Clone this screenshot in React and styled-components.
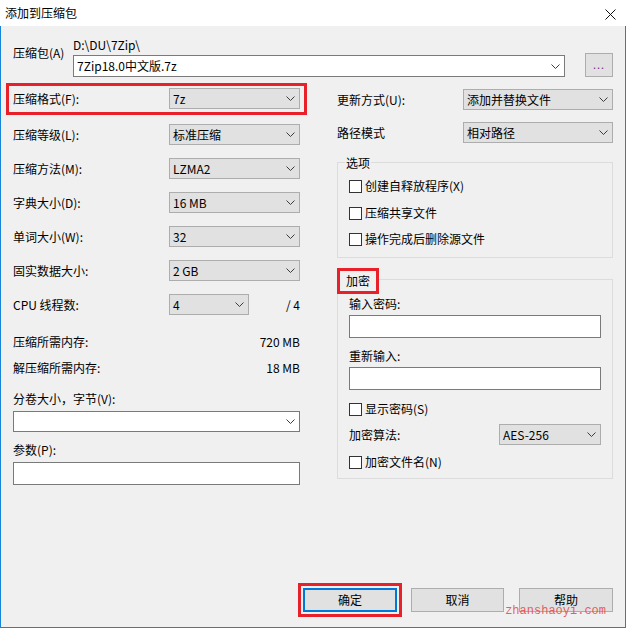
import React from 'react';
import styled, { createGlobalStyle } from 'styled-components';

const GlobalStyle = createGlobalStyle`
  html, body { margin: 0; padding: 0; background: #f0f0f0; }
  body {
    font-family: "Noto Sans CJK SC", "Noto Sans", sans-serif;
    font-size: 12px;
    color: #000;
  }
  * { box-sizing: border-box; }
`;

const Window = styled.div`
  width: 626px;
  height: 628px;
  display: flex;
  flex-direction: column;
  overflow: hidden;
`;

const TitleBar = styled.div`
  height: 26px;
  flex-shrink: 0;
  background: #fff;
  display: flex;
  align-items: center;
  justify-content: space-between;
  padding-left: 5px;
`;

const TitleText = styled.span`
  line-height: 16px;
`;

const CloseBox = styled.div`
  width: 32px;
  height: 26px;
  display: flex;
  align-items: center;
  justify-content: center;
  padding-top: 2px;
`;

const Frame = styled.div`
  flex: 1;
  display: flex;
  flex-direction: column;
  background: #f0f0f0;
  border: 1px solid #1883d7;
  border-top: none;
  padding: 0 12px 10px 12px;
`;

const ArchiveRow = styled.div`
  display: flex;
  padding-top: 11px;
`;

const ArchiveLabel = styled.div`
  width: 60px;
  padding-top: 8px;
  line-height: 16px;
`;

const ArchiveCol = styled.div`
  flex: 1;
  display: flex;
  flex-direction: column;
`;

const PathText = styled.div`
  line-height: 16px;
`;

const ArchiveLine = styled.div`
  display: flex;
  align-items: flex-end;
  justify-content: space-between;
`;

const Select = styled.div`
  width: ${p => p.$w}px;
  height: ${p => p.$h || 21}px;
  flex-shrink: 0;
  display: flex;
  align-items: center;
  justify-content: space-between;
  padding: 0 4px 0 3px;
  background: ${p => (p.$edit ? '#fff' : '#e1e1e1')};
  border: 1px solid ${p => (p.$edit ? '#7a7a7a' : '#adadad')};
  line-height: 16px;
  white-space: nowrap;
`;

const TextBox = styled.div`
  width: ${p => (p.$w ? `${p.$w}px` : '100%')};
  height: 23px;
  background: #fff;
  border: 1px solid #7a7a7a;
`;

const Button = styled.div`
  width: ${p => p.$w}px;
  height: 24px;
  margin-left: ${p => p.$ml || 0}px;
  display: flex;
  align-items: center;
  justify-content: center;
  background: #e1e1e1;
  border: ${p => (p.$default ? '2px solid #0078d7' : '1px solid #adadad')};
  line-height: 16px;
`;

const DotsButton = styled(Button)`
  align-items: flex-end;
  padding-bottom: 4px;
  color: #7a2a8a;
  font-size: 11px;
  letter-spacing: 1px;
`;

const Main = styled.div`
  display: flex;
  gap: 37px;
  margin-top: 11px;
`;

const Column = styled.div`
  width: ${p => p.$w}px;
  display: flex;
  flex-direction: column;
`;

const FieldRow = styled.div`
  display: flex;
  align-items: center;
  height: 21px;
  margin-top: ${p => p.$mt || 0}px;
`;

/* red annotation frame drawn around a row, without moving the flow */
const RowMark = styled.div`
  margin: -5px -7px -6px -7px;
  padding: 2px 4px 3px 4px;
  border: 3px solid #e8202a;
`;

const Label = styled.div`
  width: ${p => (p.$w ? `${p.$w}px` : 'auto')};
  flex: ${p => (p.$w ? '0 0 auto' : 1)};
  line-height: 16px;
  white-space: nowrap;
`;

const TextLine = styled.div`
  line-height: 16px;
  margin-top: ${p => p.$mt || 0}px;
  white-space: nowrap;
`;

const InfoRow = styled.div`
  display: flex;
  justify-content: space-between;
  line-height: 16px;
  margin-top: ${p => p.$mt || 0}px;
`;

const Spacer = styled.div`
  margin-top: ${p => p.$mt || 0}px;
`;

const Slash = styled.div`
  flex: 1;
  text-align: right;
  line-height: 16px;
`;

const Group = styled.div`
  display: flex;
  flex-direction: column;
  align-items: flex-start;
  border: 1px solid #dcdcdc;
  padding: 0 11px ${p => p.$pb}px 11px;
  margin-top: ${p => p.$mt}px;
`;

const Legend = styled.div`
  line-height: 16px;
  background: #f0f0f0;
  margin: -8px 0 0 -4px;
  padding: 0 1px;
`;

const MarkedLegend = styled.div`
  line-height: 16px;
  background: #f0f0f0;
  margin: -12px 0 0 -12px;
  padding: 2px 6px;
  border: 3px solid #e8202a;
`;

const CheckRow = styled.div`
  display: flex;
  align-items: center;
  gap: 3px;
  height: 16px;
  line-height: 16px;
  margin-top: ${p => p.$mt || 0}px;
  white-space: nowrap;
`;

const CheckBox = styled.span`
  width: 13px;
  height: 13px;
  background: #fff;
  border: 1px solid #333;
`;

const Stretch = styled.div`
  width: 100%;
  margin-top: ${p => p.$mt || 0}px;
`;

const Footer = styled.div`
  margin-top: auto;
  position: relative;
  display: flex;
  justify-content: flex-end;
  align-items: center;
`;

const RedMark = styled.div`
  border: 3px solid #e8202a;
  padding: 2px;
`;

const Watermark = styled.div`
  position: absolute;
  right: 7px;
  top: 21px;
  font-family: "Liberation Mono", monospace;
  font-size: 12px;
  line-height: 14px;
  color: rgba(226, 70, 70, 0.85);
  pointer-events: none;
`;

const Chevron = () => (
  <svg width="9" height="5" viewBox="0 0 9 5">
    <path d="M0.5 0.5L4.5 4.5L8.5 0.5" fill="none" stroke="#3c3c3c" strokeWidth="1" />
  </svg>
);

const Combo = ({ w, h, edit, children }) => (
  <Select $w={w} $h={h} $edit={edit}>
    <span>{children}</span>
    <Chevron />
  </Select>
);

const leftRows = [
  ['压缩等级(L):', '标准压缩', 15],
  ['压缩方法(M):', 'LZMA2', 13],
  ['字典大小(D):', '16 MB', 13],
  ['单词大小(W):', '32', 13],
  ['固实数据大小:', '2 GB', 13],
];

export default function App() {
  return (
    <Window>
      <GlobalStyle />
      <TitleBar>
        <TitleText>添加到压缩包</TitleText>
        <CloseBox>
          <svg width="11" height="11" viewBox="0 0 11 11">
            <path d="M0.5 0.5L10.5 10.5M10.5 0.5L0.5 10.5" stroke="#111" strokeWidth="1" />
          </svg>
        </CloseBox>
      </TitleBar>
      <Frame>
        <ArchiveRow>
          <ArchiveLabel>压缩包(A)</ArchiveLabel>
          <ArchiveCol>
            <PathText>D:\DU\7Zip\</PathText>
            <ArchiveLine>
              <Combo w={492} h={22} edit>7Zip18.0中文版.7z</Combo>
              <DotsButton $w={28}>...</DotsButton>
            </ArchiveLine>
          </ArchiveCol>
        </ArchiveRow>

        <Main>
          <Column $w={287}>
            <RowMark>
              <FieldRow>
                <Label $w={156}>压缩格式(F):</Label>
                <Combo w={131}>7z</Combo>
              </FieldRow>
            </RowMark>
            {leftRows.map(([label, value, mt]) => (
              <FieldRow key={label} $mt={mt}>
                <Label $w={156}>{label}</Label>
                <Combo w={131}>{value}</Combo>
              </FieldRow>
            ))}
            <FieldRow $mt={13}>
              <Label $w={156}>CPU 线程数:</Label>
              <Combo w={80}>4</Combo>
              <Slash>/ 4</Slash>
            </FieldRow>
            <InfoRow $mt={19}>
              <span>压缩所需内存:</span>
              <span>720 MB</span>
            </InfoRow>
            <InfoRow $mt={10}>
              <span>解压缩所需内存:</span>
              <span>18 MB</span>
            </InfoRow>
            <TextLine $mt={15}>分卷大小，字节(V):</TextLine>
            <Spacer $mt={4}>
              <Combo w={287} edit />
            </Spacer>
            <TextLine $mt={10}>参数(P):</TextLine>
            <Spacer $mt={4}>
              <TextBox />
            </Spacer>
          </Column>

          <Column $w={276}>
            <FieldRow $mt={1}>
              <Label $w={126}>更新方式(U):</Label>
              <Combo w={150}>添加并替换文件</Combo>
            </FieldRow>
            <FieldRow $mt={12}>
              <Label $w={126}>路径模式</Label>
              <Combo w={150}>相对路径</Combo>
            </FieldRow>

            <Group $mt={19} $pb={10}>
              <Legend>选项</Legend>
              <CheckRow $mt={7}><CheckBox />创建自释放程序(X)</CheckRow>
              <CheckRow $mt={11}><CheckBox />压缩共享文件</CheckRow>
              <CheckRow $mt={10}><CheckBox />操作完成后删除源文件</CheckRow>
            </Group>

            <Group $mt={21} $pb={8}>
              <MarkedLegend>加密</MarkedLegend>
              <TextLine $mt={2}>输入密码:</TextLine>
              <Stretch $mt={3}><TextBox /></Stretch>
              <TextLine $mt={10}>重新输入:</TextLine>
              <Stretch $mt={3}><TextBox /></Stretch>
              <CheckRow $mt={11}><CheckBox />显示密码(S)</CheckRow>
              <Stretch $mt={7}>
                <FieldRow>
                  <Label>加密算法:</Label>
                  <Combo w={102}>AES-256</Combo>
                </FieldRow>
              </Stretch>
              <CheckRow $mt={9}><CheckBox />加密文件名(N)</CheckRow>
            </Group>
          </Column>
        </Main>

        <Footer>
          <RedMark>
            <Button $w={94} $default>确定</Button>
          </RedMark>
          <Button $w={93} $ml={9}>取消</Button>
          <Button $w={94} $ml={15}>帮助</Button>
          <Watermark>zhanshaoyi.com</Watermark>
        </Footer>
      </Frame>
    </Window>
  );
}
